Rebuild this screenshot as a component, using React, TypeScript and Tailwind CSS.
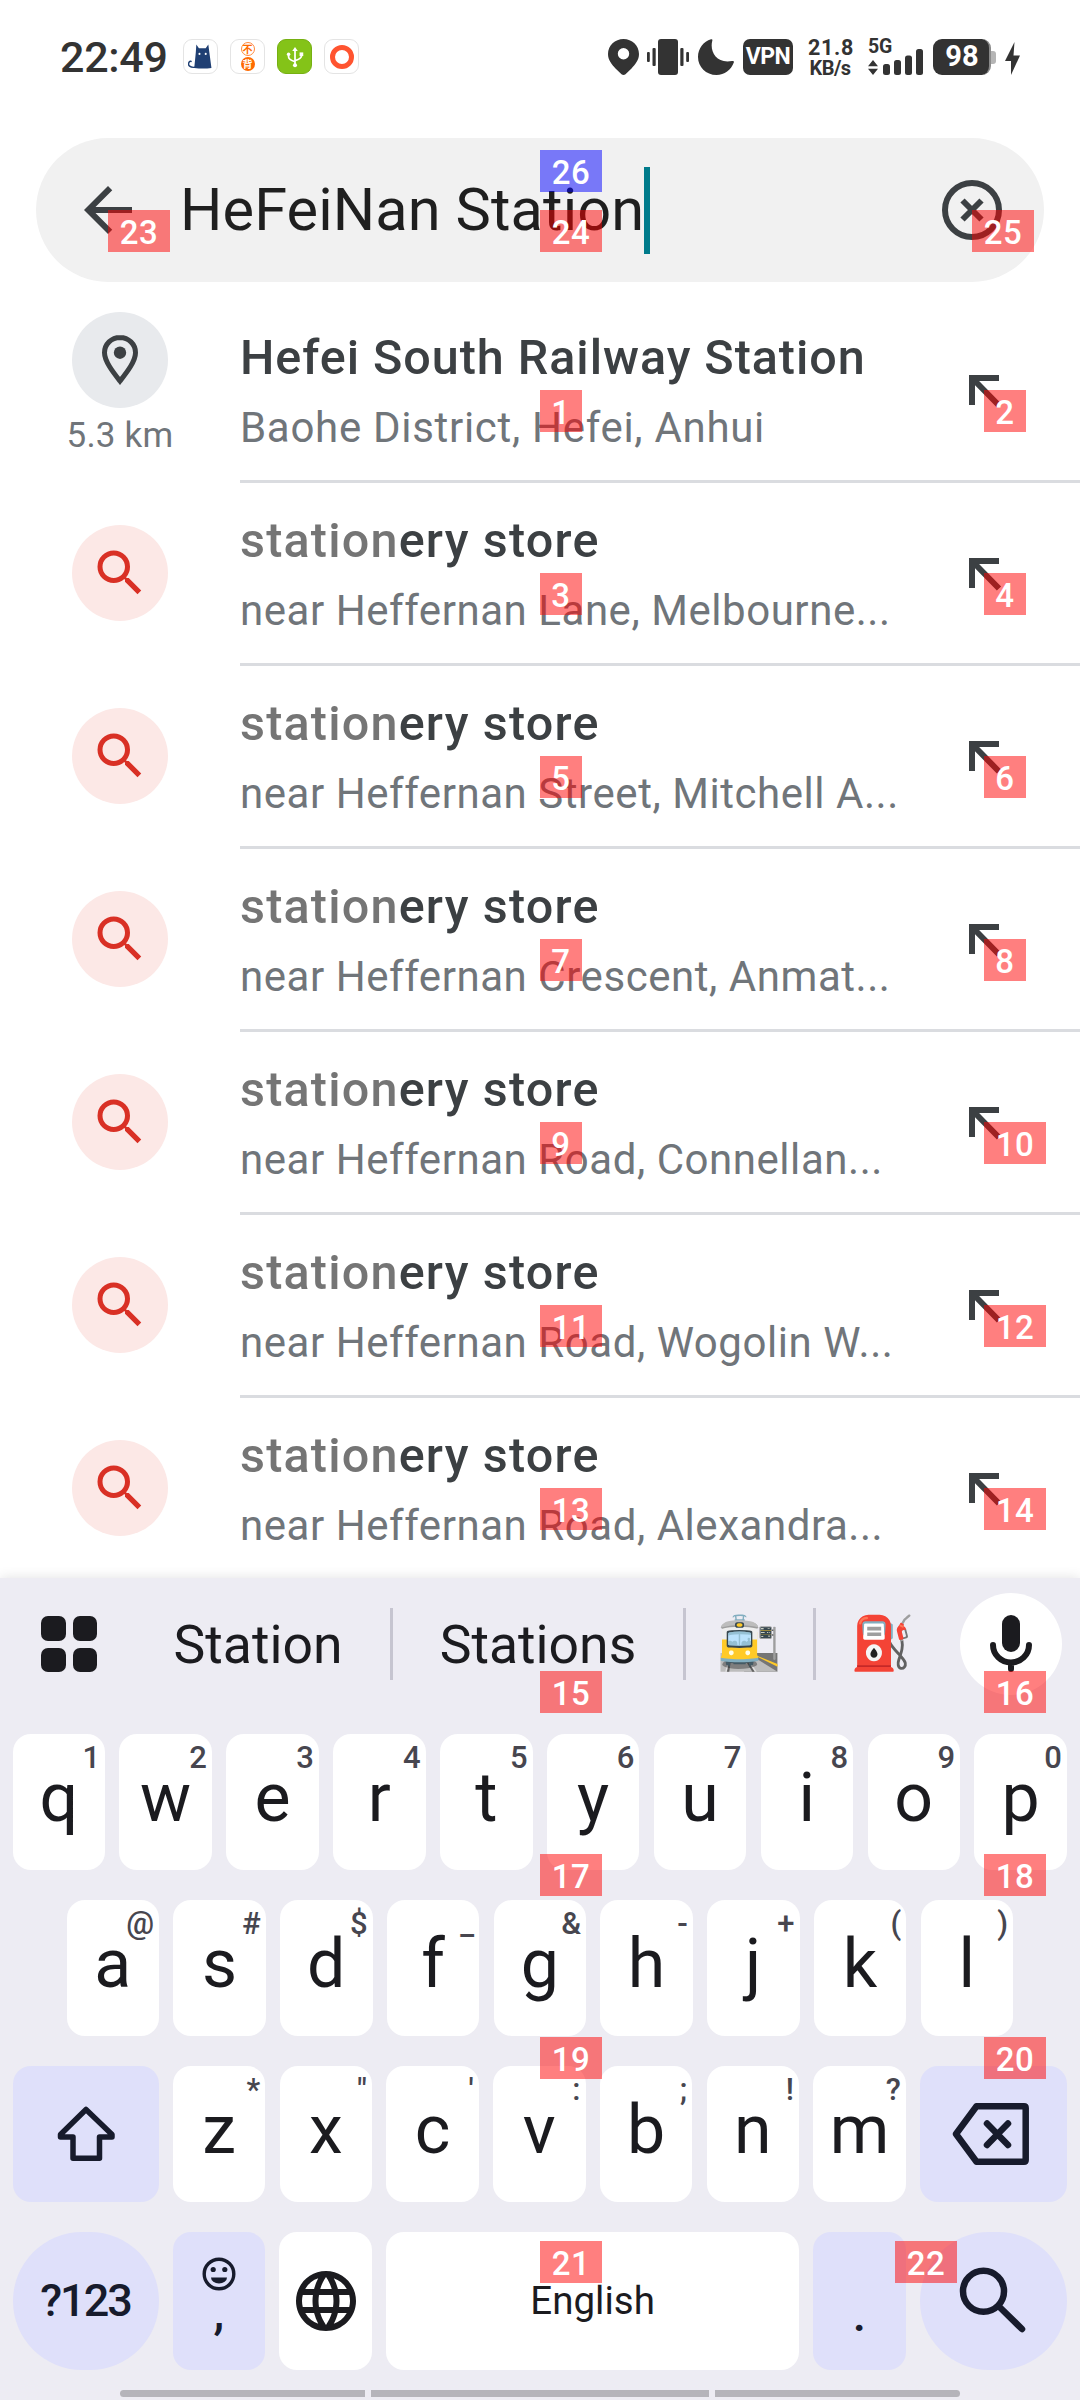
import React from "react";
import { MdArrowBack, MdLanguage, MdSearch } from "react-icons/md";

type Suggestion = { match?: string; title: string; subtitle: string; distance?: string };

const suggestions: Suggestion[] = [
  { title: "Hefei South Railway Station", subtitle: "Baohe District, Hefei, Anhui", distance: "5.3 km" },
  { match: "station", title: "ery store", subtitle: "near Heffernan Lane, Melbourne..." },
  { match: "station", title: "ery store", subtitle: "near Heffernan Street, Mitchell A..." },
  { match: "station", title: "ery store", subtitle: "near Heffernan Crescent, Anmat..." },
  { match: "station", title: "ery store", subtitle: "near Heffernan Road, Connellan..." },
  { match: "station", title: "ery store", subtitle: "near Heffernan Road, Wogolin W..." },
  { match: "station", title: "ery store", subtitle: "near Heffernan Road, Alexandra..." },
];

const row1 = [["q", "1"], ["w", "2"], ["e", "3"], ["r", "4"], ["t", "5"], ["y", "6"], ["u", "7"], ["i", "8"], ["o", "9"], ["p", "0"]];
const row2 = [["a", "@"], ["s", "#"], ["d", "$"], ["f", "_"], ["g", "&"], ["h", "-"], ["j", "+"], ["k", "("], ["l", ")"]];
const row3 = [["z", "*"], ["x", '"'], ["c", "'"], ["v", ":"], ["b", ";"], ["n", "!"], ["m", "?"]];

// Numbered element markers: [number, left, top]
const markers: [number, number, number][] = [
  [1, 540, 390], [2, 984, 390], [3, 540, 573], [4, 984, 573], [5, 540, 756], [6, 984, 756],
  [7, 540, 939], [8, 984, 939], [9, 540, 1122], [10, 984, 1122], [11, 540, 1305], [12, 984, 1305],
  [13, 540, 1488], [14, 984, 1488], [15, 540, 1671], [16, 984, 1671], [17, 540, 1854], [18, 984, 1854],
  [19, 540, 2037], [20, 984, 2037], [21, 540, 2241], [22, 895, 2241], [23, 108, 210], [24, 540, 210],
  [25, 972, 210], [26, 540, 150],
];

function StatusBar() {
  return (
    <div className="flex h-[138px] items-start pt-[39px] pl-[60px] text-[#333333]">
      <div className="w-[123px] text-[43px] leading-[36px] font-medium tracking-[-0.3px]">22:49</div>
      <div className="flex w-[176px] justify-between">
        <div className="flex size-[35px] items-center justify-center rounded-[9px] border border-[#e4e4e4]">
          <svg viewBox="0 0 24 24" className="size-[25px]" fill="#1f3f73">
            <path d="M8 .5l2.500 3.500h6.500L19.500.5l1 7.500L22.500 23q-8 1.200-16.500 0L7.500 8z" />
            <path d="M7 22.300C2 23 -.5 20.500 1 17.500q1-1.500 2.500-.5" fill="none" stroke="#1f3f73" strokeWidth="1.400" />
            <circle cx="11" cy="9.500" r="1" fill="#fff" />
            <circle cx="17" cy="9.500" r="1" fill="#fff" />
          </svg>
        </div>
        <div className="flex size-[35px] flex-col items-center justify-center gap-px rounded-[9px] border border-[#e4e4e4] font-['Noto_Sans_CJK_SC',sans-serif] text-[10px] leading-[12px] font-bold">
          <span className="flex size-[14px] items-center justify-center rounded-full border border-[#ff8a3c] text-[#ff6a00]">不</span>
          <span className="flex size-[14px] items-center justify-center rounded-full bg-[#ff6a00] text-white">背</span>
        </div>
        <div className="flex size-[35px] items-center justify-center rounded-[9px] border border-[#76b012] bg-[#84c318]">
          <svg viewBox="0 0 24 24" className="size-[22px]" fill="none" stroke="#fff" strokeWidth="1.900">
            <path d="M12 4v17M5 9v3q0 3 7 5M19 9v2q0 3-7 5" />
            <path d="M12 1l3 4.500H9z" fill="#fff" stroke="none" />
            <circle cx="12" cy="21" r="2.200" fill="#fff" stroke="none" />
            <circle cx="5" cy="9" r="1.900" fill="#fff" stroke="none" />
            <path d="M17 7h4v4h-4z" fill="#fff" stroke="none" />
          </svg>
        </div>
        <div className="flex size-[35px] items-center justify-center rounded-[9px] border border-[#e4e4e4]">
          <div className="size-[24px] rounded-full border-[5.5px] border-[#ff5430]" />
        </div>
      </div>
      <div className="ml-[249px] flex h-[36px] items-start">
        <svg viewBox="0 0 31 36" className="h-[36px] w-[31px]" fill="#333">
          <path fillRule="evenodd" d="M15.500 0C7 0 0 6.500 0 15c0 6 3.500 10 7.500 14.500l6 5.700q2 1.500 4 0l6-5.700C27.500 25 31 21 31 15 31 6.500 24 0 15.500 0zm0 9a5.700 5.700 0 1 1 0 11.400 5.700 5.700 0 0 1 0-11.400z" />
        </svg>
        <svg viewBox="0 0 42 36" className="ml-[8px] h-[36px] w-[42px]" fill="#333">
          <rect x="11" width="20" height="36" rx="3" />
          <rect x="0" y="13" width="2.800" height="10" rx="1" />
          <rect x="5.500" y="9" width="3.200" height="18" rx="1" />
          <rect x="33.300" y="9" width="3.200" height="18" rx="1" />
          <rect x="39.200" y="13" width="2.800" height="10" rx="1" />
        </svg>
        <svg viewBox="0 0 36 36" className="ml-[9px] size-[36px]" fill="#333">
          <path d="M13 .3c1.200-.4 1.700.4 1.300 1.500C11.500 12 18 25 34 22c1.500-.3 2.300.3 1.700 1.800C33 31 26.500 36 18.500 36 8 36 0 28 0 18 0 9.500 5.500 2.500 13 .3z" />
        </svg>
        <div className="ml-[9px] flex h-[36px] w-[50px] items-center justify-center rounded-[7px] bg-[#333] text-[23px] font-bold tracking-[-0.5px] text-white">VPN</div>
        <div className="ml-[15px] w-[44px] text-center text-[21.5px] leading-[21px] font-bold">
          <div className="-mt-[2px] tracking-[0.7px]">21.8</div>
          <div className="text-[20px] tracking-[-0.6px]">KB/s</div>
        </div>
        <div className="ml-[16px] h-[36px] w-[56px]">
          <div className="h-[14px] text-[19.5px] leading-[15px] font-bold tracking-[-0.3px]">5G</div>
          <svg viewBox="0 0 56 26" className="-mt-[4px] h-[26px] w-[56px]" fill="#333">
            <path d="M5 11l5 6.200H0zM5 26l5-6.200H0z" />
            <rect x="15" y="15" width="7" height="11" rx="2.500" />
            <rect x="26" y="11" width="7" height="15" rx="2.500" />
            <rect x="37" y="6.500" width="7" height="19.500" rx="2.500" />
            <rect x="48" y="0" width="7" height="26" rx="2.500" />
          </svg>
        </div>
        <div className="ml-[9px] flex h-[36px] w-[58px] items-center justify-center rounded-[9px] border-r-2 border-[#8a8a8a] bg-[#333] pl-[2px] text-[29px] font-bold text-white">98</div>
        <div className="mt-[12px] h-[13px] w-[5px] rounded-r-[3px] bg-[#b5b5b5]" />
        <svg viewBox="0 0 15 33" className="mt-[3px] ml-[9px] h-[33px] w-[15px]" fill="#333">
          <path d="M9.500 0L0 19h6v14l9-19.500H8.500z" />
        </svg>
      </div>
    </div>
  );
}

function SearchField() {
  return (
    <div className="mx-[36px] flex h-[144px] items-center rounded-full bg-[#f1f1f1] pr-[42px] pl-[36px]">
      <MdArrowBack className="size-[72px] text-[#3c4043]" />
      <div className="ml-[36px] text-[59.5px] leading-[72px] tracking-[0.1px] whitespace-nowrap text-[#1f1f1f]">HeFeiNan Station</div>
      <div className="h-[87px] w-[6px] bg-[#007b8b]" />
      <svg viewBox="0 0 60 60" className="ml-auto size-[60px]" fill="none" stroke="#3c4043" strokeWidth="6">
        <circle cx="30" cy="30" r="27" />
        <path d="M20.500 20.500l19 19M39.500 20.500l-19 19" />
      </svg>
    </div>
  );
}

function SuggestionRow({ item }: { item: Suggestion }) {
  return (
    <div className="flex h-[183px] shrink-0">
      <div className="flex w-[240px] flex-col items-center">
        {item.distance ? (
          <>
            <div className="mt-[12px] flex size-[96px] items-center justify-center rounded-full bg-[#e8eaed]">
              <svg viewBox="0 0 36 50" className="h-[50px] w-[36px]" fill="none" stroke="#3c4043" strokeWidth="5">
                <path d="M18 2.500C9.400 2.500 2.500 9.200 2.500 17.700c0 8.500 8.500 19.300 15.500 28.300 7-9 15.500-19.800 15.500-28.300C33.500 9.200 26.600 2.500 18 2.500z" />
                <circle cx="18" cy="17.700" r="6.200" fill="#3c4043" stroke="none" />
              </svg>
            </div>
            <div className="mt-[8px] text-[35px] leading-[40px] tracking-[0.2px] text-[#70757a]">{item.distance}</div>
          </>
        ) : (
          <div className="mt-[42px] flex size-[96px] items-center justify-center rounded-full bg-[#fce8e6]">
            <MdSearch className="size-[60px] text-[#d93025]" />
          </div>
        )}
      </div>
      <div className="flex flex-1 border-b-[3px] border-[#dadce0]">
        <div className="w-[729px] pt-[30px] whitespace-nowrap">
          <div className={`text-[48.5px] leading-[56px] font-medium text-[#3c4043] ${item.match ? "tracking-[1.2px]" : "tracking-[0.95px]"}`}>
            {item.match && <span className="text-[#757575]">{item.match}</span>}
            {item.title}
          </div>
          <div className={`mt-[17px] text-[42px] leading-[50px] text-[#70757a] ${item.match ? "tracking-[0.55px]" : "tracking-[0.7px]"}`}>{item.subtitle}</div>
        </div>
        <svg viewBox="0 0 36 36" className="mt-[75px] size-[36px]" fill="none" stroke="#3c4043" strokeWidth="6">
          <path d="M30 3H3v27M4 4l26 26.500" />
        </svg>
      </div>
    </div>
  );
}

function LetterKey({ label, hint }: { label: string; hint: string }) {
  return (
    <div className="relative h-[136px] w-[92.5px] rounded-[18px] bg-white pt-[24px] text-center text-[68px] leading-[80px] text-[#1b1b1f]">
      {label}
      <span className="absolute top-[6px] right-[5px] text-[31px] leading-[36px] font-medium text-[#47464f]">{hint}</span>
    </div>
  );
}

function SuggestionStrip() {
  return (
    <div className="flex h-[132px] items-center text-[53.5px] text-[#1b1b1f]">
      <div className="w-[126px] pl-[41px]">
        <div className="grid w-[56px] grid-cols-2 gap-[7px]">
          <div className="h-[24.5px] rounded-[7px] bg-[#1b1b1f]" />
          <div className="h-[24.5px] rounded-[7px] bg-[#1b1b1f]" />
          <div className="h-[24.5px] rounded-[7px] bg-[#1b1b1f]" />
          <div className="h-[24.5px] rounded-[7px] bg-[#1b1b1f]" />
        </div>
      </div>
      <div className="w-[264px] pt-[2px] text-center">Station</div>
      <div className="h-[72px] w-[3px] bg-[#c6c5d0]" />
      <div className="w-[290px] pt-[2px] text-center">Stations</div>
      <div className="h-[72px] w-[3px] bg-[#c6c5d0]" />
      <div className="w-[127px] text-center text-[52px] leading-[60px]">🚉</div>
      <div className="h-[72px] w-[3px] bg-[#c6c5d0]" />
      <div className="w-[133px] text-center text-[52px] leading-[60px]">⛽</div>
      <div className="ml-[11px] flex size-[102px] items-center justify-center rounded-full bg-white">
        <svg viewBox="0 0 42 58" className="h-[58px] w-[42px]" fill="none" stroke="#1b1b1f" strokeWidth="6" strokeLinecap="round">
          <rect x="12" y="0" width="18" height="37" rx="9" fill="#1b1b1f" stroke="none" />
          <path d="M3 30a18 17.500 0 0 0 36 0M21 48v6" />
        </svg>
      </div>
    </div>
  );
}

function Keyboard() {
  return (
    <div className="relative h-[822px] bg-[#edecf3] shadow-[0_0_12px_rgba(0,0,0,0.12)]">
      <SuggestionStrip />
      <div className="flex flex-col gap-[30px] pt-[24px] pr-[13px] pl-[12.5px]">
        <div className="flex justify-between">
          {row1.map(([l, h]) => <LetterKey key={l} label={l} hint={h} />)}
        </div>
        <div className="flex justify-between px-[54px]">
          {row2.map(([l, h]) => <LetterKey key={l} label={l} hint={h} />)}
        </div>
        <div className="flex justify-between">
          <div className="h-[136px] w-[146px] rounded-[18px] bg-[#dfe0fa]">
            <svg viewBox="13 2066 146 136" className="h-[136px] w-[146px]" fill="none" stroke="#171b2c" strokeWidth="5.500" strokeLinejoin="round">
              <path d="M86 2109.500L60.500 2134.500v2.500h12.500v21.200h26.500v-21.200h12.500v-2.500z" />
            </svg>
          </div>
          {row3.map(([l, h]) => <LetterKey key={l} label={l} hint={h} />)}
          <div className="h-[136px] w-[147px] rounded-[18px] bg-[#dfe0fa]">
            <svg viewBox="920 2066 147 136" className="h-[136px] w-[147px]" fill="none" stroke="#171b2c" strokeWidth="6.500" strokeLinejoin="round" strokeLinecap="round">
              <path d="M956 2134l20.500-27.700h47.500q1.700 0 1.700 1.700v52q0 1.700-1.700 1.700h-47.500z" />
              <path d="M987 2123.500l21 21.500M1008 2123.500l-21 21.500" />
            </svg>
          </div>
        </div>
        <div className="flex h-[138px] justify-between text-[#171b2c]">
          <div className="flex w-[146px] items-center justify-center rounded-full bg-[#dfe0fa] text-[45px] font-medium tracking-[-2px]">?123</div>
          <div className="flex w-[92.5px] flex-col items-center rounded-[18px] bg-[#dfe0fa] pt-[25px]">
            <svg viewBox="0 0 34 34" className="size-[34px]" fill="none" stroke="#171b2c" strokeWidth="3.400">
              <circle cx="17" cy="17" r="14.800" />
              <path d="M9 20.500h16a8 6 0 0 1-16 0z" fill="#171b2c" stroke="none" />
              <circle cx="11.200" cy="12.500" r="2.600" fill="#171b2c" stroke="none" />
              <circle cx="22.800" cy="12.500" r="2.600" fill="#171b2c" stroke="none" />
            </svg>
            <div className="-mt-[3px] text-[48px] leading-[48px] font-medium">,</div>
          </div>
          <div className="flex w-[92.5px] items-center justify-center rounded-[18px] bg-white">
            <MdLanguage className="size-[72px] text-[#1b1b1f]" />
          </div>
          <div className="flex w-[413px] items-center justify-center rounded-[18px] bg-white text-[38.5px] text-[#1b1b1f]">English</div>
          <div className="flex w-[92.5px] items-end justify-center rounded-[18px] bg-[#dfe0fa] pb-[31px] text-[48px] leading-[48px] font-medium">.</div>
          <div className="w-[147px] rounded-full bg-[#dfe0fa]">
            <svg viewBox="920 2232 147 138" className="h-[138px] w-[147px]" fill="none" stroke="#171b2c" strokeWidth="6.500" strokeLinecap="round">
              <circle cx="983.500" cy="2291.200" r="20.500" />
              <path d="M999 2306.500l23 22.500" />
            </svg>
          </div>
        </div>
      </div>
      <div className="mt-[20px] flex gap-[6px] pl-[120px]">
        <div className="h-[7px] w-[245px] rounded-l-full bg-[#b5b4ba]" />
        <div className="h-[7px] w-[338px] bg-[#b5b4ba]" />
        <div className="h-[7px] w-[245px] rounded-r-full bg-[#b5b4ba]" />
      </div>
    </div>
  );
}

export default function App() {
  return (
    <div className="relative h-[2400px] w-[1080px] overflow-hidden bg-white font-['Roboto',sans-serif]">
      <StatusBar />
      <SearchField />
      <div className="mt-[18px] flex h-[1278px] flex-col overflow-hidden">
        {suggestions.map((s) => <SuggestionRow key={s.subtitle} item={s} />)}
      </div>
      <Keyboard />
      {markers.map(([n, x, y]) => (
        <div
          key={n}
          className={`absolute flex h-[42px] items-center justify-center pt-[3px] text-[33px] leading-[39px] font-medium tracking-[0.5px] text-white ${n < 10 ? "w-[42px]" : "w-[62px]"} ${n === 26 ? "bg-[#0000ff]/50" : "bg-[#ff0000]/50"}`}
          style={{ left: x, top: y }}
        >
          {n}
        </div>
      ))}
    </div>
  );
}
